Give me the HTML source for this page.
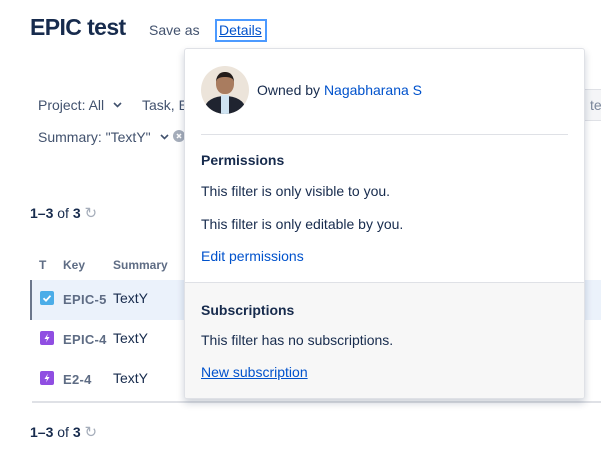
<!DOCTYPE html>
<html><head><meta charset="utf-8"><style>
*{box-sizing:border-box;margin:0;padding:0}
body{width:601px;height:461px;overflow:hidden;background:#fff;font-family:"Liberation Sans",sans-serif;color:#172b4d;position:relative;font-size:14px}
.a{position:absolute;white-space:nowrap}
.g{color:#42526e}
.b{color:#0052cc}
</style></head><body>
<div class="a" style="left:30px;top:14px;font-size:23px;font-weight:bold;letter-spacing:-0.6px">EPIC test</div>
<div class="a g" style="left:149px;top:22px;font-size:14px">Save as</div>
<div class="a" style="left:215px;top:19px;width:52px;height:23px;border:2px solid #4c9aff"></div>
<div class="a b" style="left:219px;top:22px;text-decoration:underline">Details</div>

<div class="a g" style="left:38px;top:97px">Project: All</div>
<svg class="a" style="left:113px;top:101px" width="9" height="7" viewBox="0 0 9 7"><path d="M1 2l3.5 3.5L8 2" fill="none" stroke="#42526e" stroke-width="1.6"/></svg>
<div class="a g" style="left:142px;top:97px">Task, E</div>
<div class="a g" style="left:38px;top:129px">Summary: "TextY"</div>
<svg class="a" style="left:160px;top:133px" width="9" height="7" viewBox="0 0 9 7"><path d="M1 2l3.5 3.5L8 2" fill="none" stroke="#42526e" stroke-width="1.6"/></svg>
<svg class="a" style="left:173px;top:130px" width="12" height="12" viewBox="0 0 12 12"><circle cx="6" cy="6" r="6" fill="#a5adba"/><path d="M4 4l4 4M8 4l-4 4" stroke="#fff" stroke-width="1.5"/></svg>
<div class="a" style="left:584px;top:89px;width:20px;height:32px;background:#f4f5f7;border:1px solid #dfe1e6"></div>
<div class="a" style="left:590px;top:97px;color:#7a869a">te</div>

<div class="a" style="left:30px;top:204px"><b>1–3</b> of <b>3</b> <span style="color:#a5adba;font-size:15px">&#x21bb;</span></div>
<div class="a" style="left:39px;top:258px;font-size:12px;font-weight:bold;color:#5e6c84">T</div>
<div class="a" style="left:63px;top:258px;font-size:12px;font-weight:bold;color:#5e6c84">Key</div>
<div class="a" style="left:113px;top:258px;font-size:12px;font-weight:bold;color:#5e6c84">Summary</div>
<div class="a" style="left:30px;top:280px;width:571px;height:40px;background:#ebf2fb;border-left:2px solid #6b778c"></div>
<svg class="a" style="left:40px;top:291px" width="14" height="14" viewBox="0 0 14 14"><rect width="14" height="14" rx="2" fill="#4bade8"/><path d="M3.5 7.2l2.5 2.5 4.5-5" fill="none" stroke="#fff" stroke-width="1.8"/></svg>
<svg class="a" style="left:40px;top:331px" width="14" height="14" viewBox="0 0 14 14"><rect width="14" height="14" rx="2" fill="#904ee2"/><path d="M8 2.5L4.5 8H7l-1 3.5L9.5 6H7z" fill="#fff"/></svg>
<svg class="a" style="left:40px;top:371px" width="14" height="14" viewBox="0 0 14 14"><rect width="14" height="14" rx="2" fill="#904ee2"/><path d="M8 2.5L4.5 8H7l-1 3.5L9.5 6H7z" fill="#fff"/></svg>
<div class="a" style="left:63px;top:292px;font-size:13px;font-weight:bold;color:#5e6c84;letter-spacing:0.3px">EPIC-5</div>
<div class="a" style="left:113px;top:290px">TextY</div>
<div class="a" style="left:63px;top:332px;font-size:13px;font-weight:bold;color:#5e6c84;letter-spacing:0.3px">EPIC-4</div>
<div class="a" style="left:113px;top:330px">TextY</div>
<div class="a" style="left:63px;top:372px;font-size:13px;font-weight:bold;color:#5e6c84;letter-spacing:0.3px">E2-4</div>
<div class="a" style="left:113px;top:370px">TextY</div>
<div class="a" style="left:32px;top:401px;width:569px;height:2px;background:#dfe1e6"></div>
<div class="a" style="left:30px;top:423px"><b>1–3</b> of <b>3</b> <span style="color:#a5adba;font-size:15px">&#x21bb;</span></div>

<div class="a" style="left:184px;top:48px;width:401px;height:351px;background:#fff;border:1px solid #dfe1e6;border-radius:3px;box-shadow:0 4px 8px rgba(9,30,66,.2);overflow:hidden">
  <div class="a" style="left:16px;top:17px;width:48px;height:48px;border-radius:50%;background:#ece4da;overflow:hidden">
    <div class="a" style="left:15px;top:6px;width:18px;height:22px;border-radius:45%;background:#a97c5f;border-top:5px solid #231c1a"></div>
    <div class="a" style="left:4px;top:30px;width:40px;height:24px;border-radius:50% 50% 0 0;background:#1f2430"></div>
    <div class="a" style="left:20px;top:29px;width:8px;height:20px;background:#cfe3f1"></div>
  </div>
  <div class="a" style="left:72px;top:33px">Owned by <span class="b">Nagabharana S</span></div>
  <div class="a" style="left:16px;top:85px;width:367px;height:1px;background:#dfe1e6"></div>
  <div class="a" style="left:16px;top:103px;font-weight:bold">Permissions</div>
  <div class="a" style="left:16px;top:134px">This filter is only visible to you.</div>
  <div class="a" style="left:16px;top:167px">This filter is only editable by you.</div>
  <div class="a b" style="left:16px;top:199px">Edit permissions</div>
  <div class="a" style="left:0;top:233px;width:401px;height:120px;background:#f7f7f7;border-top:1px solid #dfe1e6"></div>
  <div class="a" style="left:16px;top:253px;font-weight:bold">Subscriptions</div>
  <div class="a" style="left:16px;top:283px">This filter has no subscriptions.</div>
  <div class="a b" style="left:16px;top:315px;text-decoration:underline">New subscription</div>
</div>
</body></html>
